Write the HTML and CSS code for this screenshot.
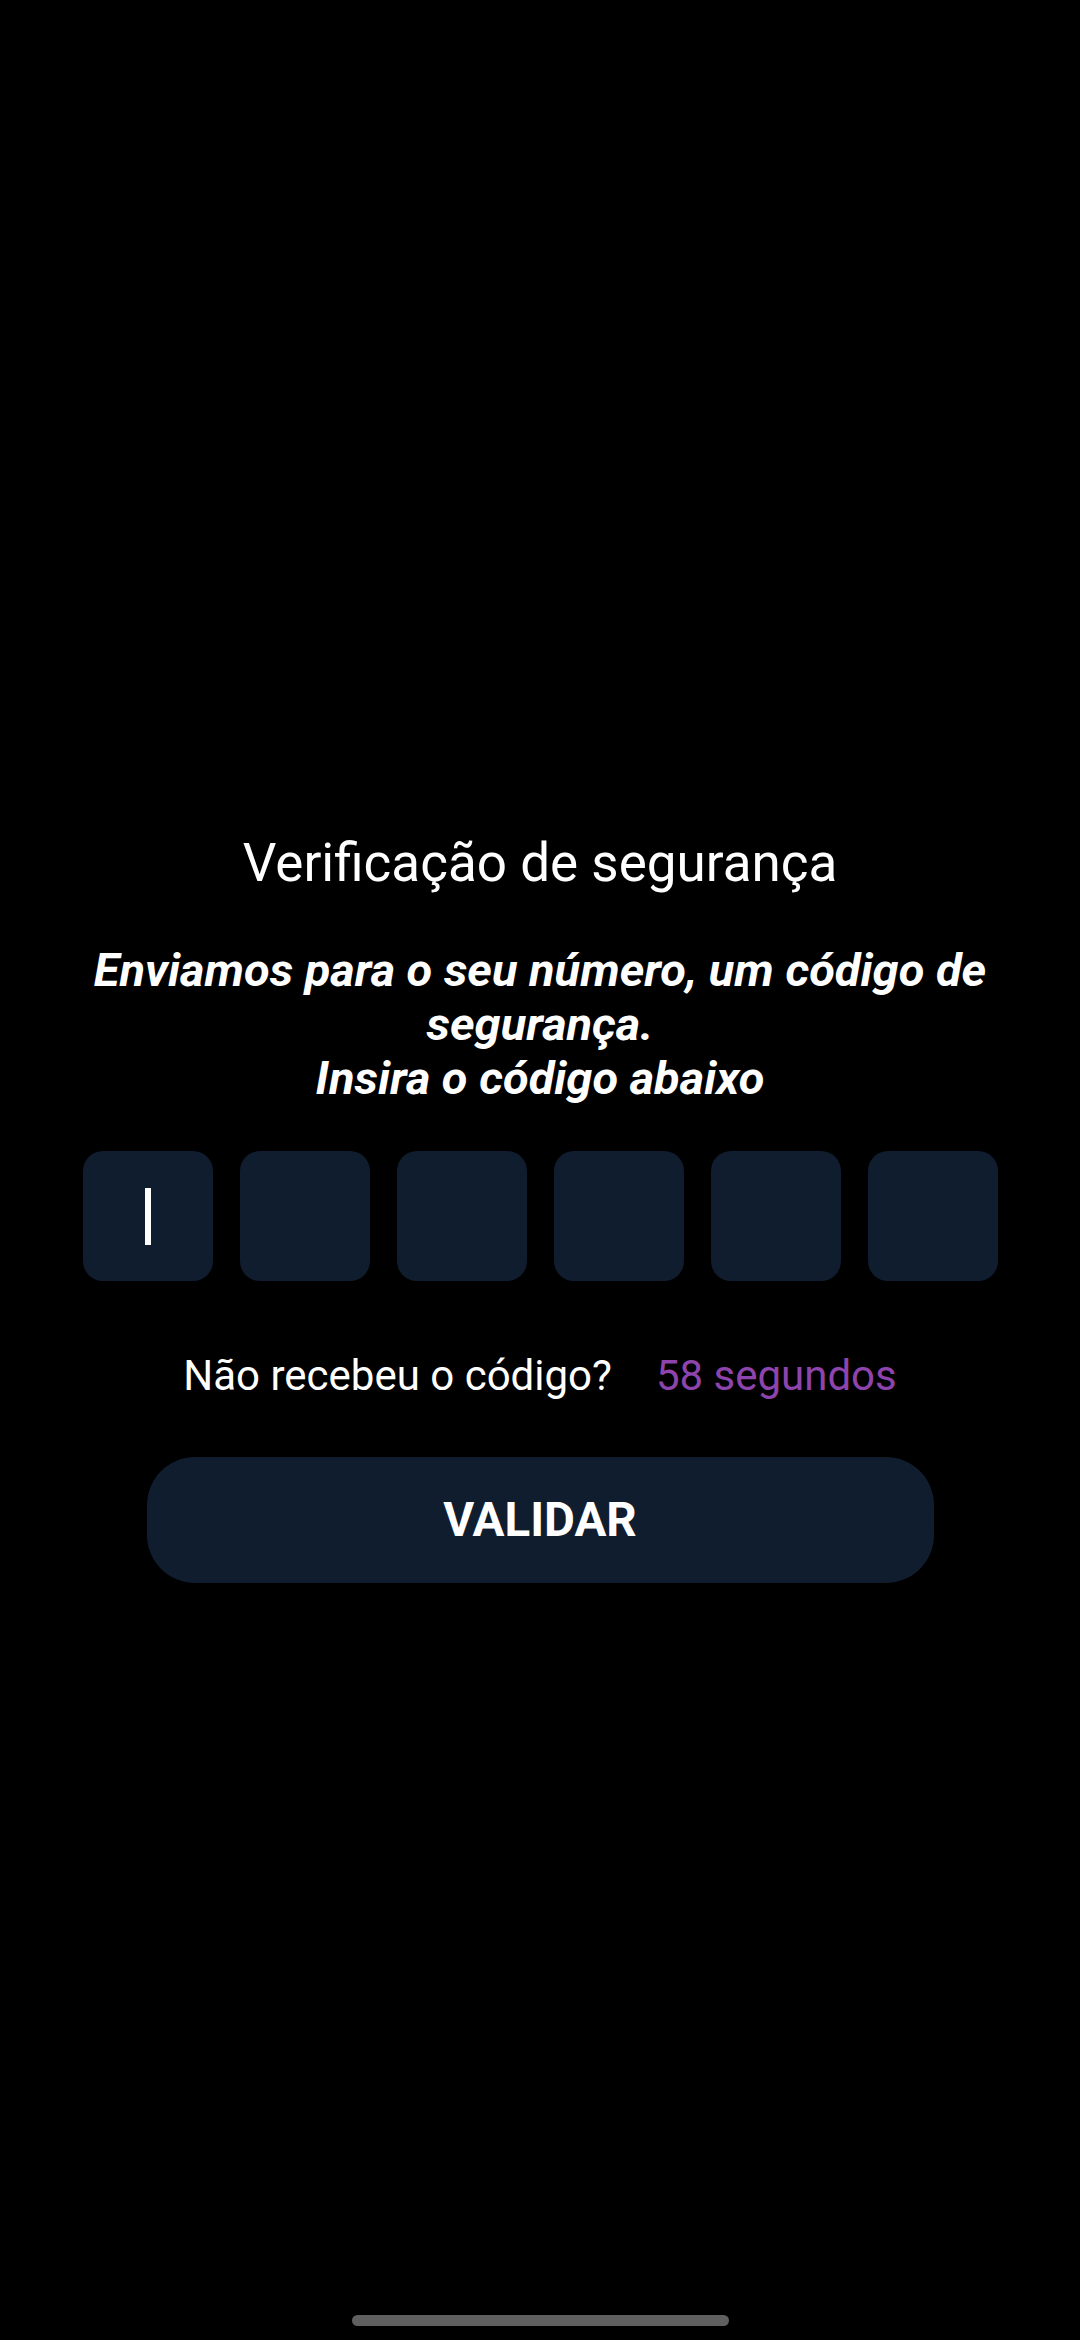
FILE: index.html
```html
<!DOCTYPE html>
<html lang="pt-BR">
<head>
    <meta charset="UTF-8">
    <meta name="viewport" content="width=device-width, initial-scale=1.0">
    <title>Verificação de segurança</title>
    <link rel="stylesheet" href="styles.css">
</head>
<body>
    <div class="screen">
        <div class="content">
            <h1 class="title">Verificação de segurança</h1>
            <p class="subtitle">Enviamos para o seu número, um código de segurança.<br>Insira o código abaixo</p>

            <!-- Code inputs -->
            <div class="code-row">
                <div class="code-box active"><span class="cursor"></span></div>
                <div class="code-box"></div>
                <div class="code-box"></div>
                <div class="code-box"></div>
                <div class="code-box"></div>
                <div class="code-box"></div>
            </div>

            <div class="resend">
                <span>Não recebeu o código?</span>
                <span class="timer">58 segundos</span>
            </div>

            <button class="validate">VALIDAR</button>
        </div>

        <div class="home-bar"></div>
    </div>
</body>
</html>
```

FILE: styles.css
```css
/* Global */
body {
    margin: 0;
    background-color: #000000;
    color: #FFFFFF;
    font-family: Roboto, 'Noto Sans', sans-serif;
}

.screen {
    display: flex;
    flex-direction: column;
    align-items: center;
    min-height: 2340px;
}

.content {
    display: flex;
    flex-direction: column;
    align-items: center;
    padding-top: 832px;
    width: 100%;
}

.title {
    margin: 0;
    font-size: 53px;
    font-weight: 400;
    line-height: 62px;
}

.subtitle {
    margin: 49px 0 0;
    width: 960px;
    font-size: 47px;
    font-weight: 700;
    font-style: italic;
    line-height: 54px;
    text-align: center;
}

/* Code boxes */
.code-row {
    display: flex;
    gap: 27px;
    margin-top: 46px;
}

.code-box {
    display: flex;
    justify-content: center;
    align-items: center;
    width: 130px;
    height: 130px;
    border-radius: 20px;
    background-color: #0F1D2F;
}

.cursor {
    width: 6px;
    height: 57px;
    background-color: #FFFFFF;
}

.resend {
    display: flex;
    gap: 44px;
    margin-top: 70px;
    font-size: 42px;
    line-height: 50px;
}

.timer {
    color: #8E44AD;
}

.validate {
    margin-top: 56px;
    width: 787px;
    height: 126px;
    border: none;
    border-radius: 48px;
    background-color: #0F1D2F;
    color: #FFFFFF;
    font-family: Roboto, sans-serif;
    font-size: 47.5px;
    font-weight: 700;
}

.home-bar {
    margin-top: auto;
    margin-bottom: 14px;
    width: 377px;
    height: 11px;
    border-radius: 6px;
    background-color: #5F5F5F;
}
```
